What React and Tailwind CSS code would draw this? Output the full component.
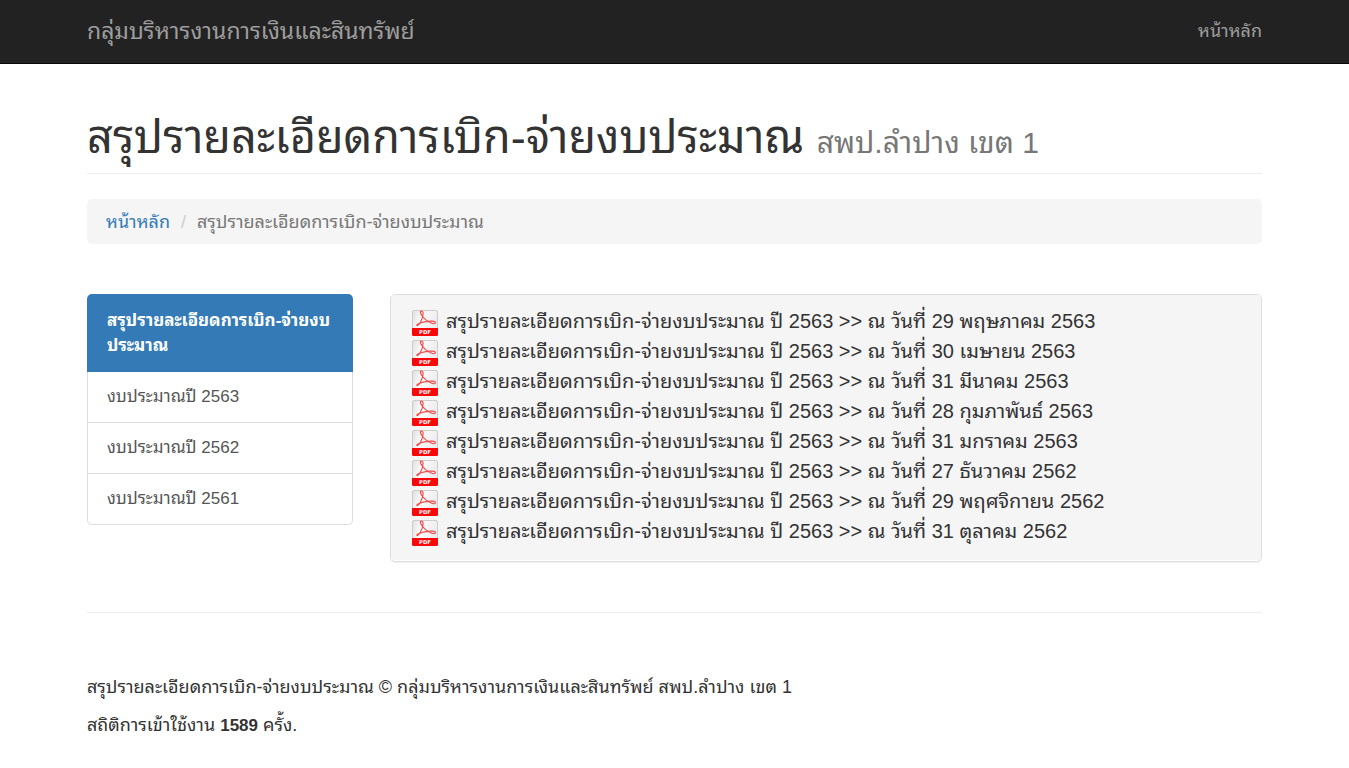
const title = 'สรุปรายละเอียดการเบิก-จ่ายงบประมาณ';
const dates = ['29 พฤษภาคม 2563', '30 เมษายน 2563', '31 มีนาคม 2563', '28 กุมภาพันธ์ 2563', '31 มกราคม 2563', '27 ธันวาคม 2562', '29 พฤศจิกายน 2562', '31 ตุลาคม 2562'];
const years = ['2563', '2562', '2561'];

function PdfIcon() {
  return (
    <svg className="h-[26px] w-[26px] shrink-0" viewBox="0 0 26 26" aria-hidden="true">
      <defs>
        <linearGradient id="paper" x1="0" y1="0" x2="1" y2="0.3">
          <stop offset="0" stopColor="#dedede" />
          <stop offset="0.4" stopColor="#fcfcfc" />
          <stop offset="1" stopColor="#ececec" />
        </linearGradient>
      </defs>
      <rect x="0.5" y="0.5" width="25" height="25" rx="1.5" fill="url(#paper)" stroke="#cccccc" />
      <path d="M0 18h26v6.500a1.500 1.500 0 0 1-1.500 1.500h-23A1.500 1.500 0 0 1 0 24.500z" fill="#f80808" />
      <path d="M10.500 6.500C9 4.500 8 2 8.800 1.300c.9-.7 2.300.2 2.300 2.200 0 3-1.200 6.300-3 9.300-1.100 1.900-2.300 3.200-3 2.800-.8-.6 1-2 3.700-2.800 3.700-1.200 8.200-1.800 11.700-1.600 2.100.1 3.200.9 2.800 1.800-.5 1-2.600.8-4.700-.2-3.200-1.500-6.300-3.900-8.100-6.300z" fill="none" stroke="#f34a4a" strokeWidth="1.200" />
      <text x="13" y="24" textAnchor="middle" fontFamily="DejaVu Sans, sans-serif" fontSize="5.300" fontWeight="700" fill="#fff">PDF</text>
    </svg>
  );
}

export default function App() {
  return (
    <div className="min-h-screen bg-white font-['Liberation_Sans','Noto_Sans_Thai_Looped','Loma','Garuda','Waree','Tahoma',sans-serif] text-[18px] leading-6 text-[#333]">
      <nav className="border-b border-[#080808] bg-[#222] text-[#9d9d9d]">
        <div className="mx-auto flex h-[63px] max-w-[1175px] items-center justify-between pb-0.5">
          <a href="#" className="text-[23px]">กลุ่มบริหารงานการเงินและสินทรัพย์</a>
          <a href="#">หน้าหลัก</a>
        </div>
      </nav>
      <main className="mx-auto max-w-[1175px] pt-12">
        <h1 className="border-b border-[#eee] pb-[9px] text-[45px] leading-[52px]">{title} <small className="text-[30px] leading-none text-[#777]">สพป.ลำปาง เขต 1</small></h1>
        <nav className="mt-[25px] flex h-[45px] items-center rounded-[5px] bg-[#f5f5f5] px-[19px]">
          <a href="#" className="text-[#337ab7]">หน้าหลัก</a>
          <span className="px-[11px] text-[#ccc]">/</span>
          <span className="text-[#777]">{title}</span>
        </nav>
        <div className="mt-[50px] flex items-start gap-[37px]">
          <nav className="w-[266px] shrink-0">
            <a href="#" className="block rounded-t-[5px] bg-[#337ab7] px-5 py-[14px] text-[17px] leading-[25px] font-bold text-white">สรุปรายละเอียดการเบิก-จ่ายงบ<wbr />ประมาณ</a>
            {years.map(y => <a key={y} href="#" className="block border-x border-b border-[#ddd] px-[19px] py-[13px] text-[17px] text-[#555] last:rounded-b-[5px]">งบประมาณปี {y}</a>)}
          </nav>
          <section className="grow rounded-[5px] border border-[#ddd] bg-white pb-px shadow-[0_1px_1px_rgba(0,0,0,0.05)]">
            <div className="rounded-t-[4px] bg-[#f5f5f5] px-[21px] pt-[11px] pb-[14px]">
              {dates.map(d => <a key={d} href="#" className="flex h-[30px] items-end gap-2 text-[20px] leading-[30px]"><PdfIcon /><span>{title} ปี 2563 &gt;&gt; ณ วันที่ {d}</span></a>)}
            </div>
          </section>
        </div>
        <hr className="mt-[50px] border-[#eee]" />
        <footer className="mt-[62px]">
          <p>{title} © กลุ่มบริหารงานการเงินและสินทรัพย์ สพป.ลำปาง เขต 1</p>
          <p className="mt-[14px] pb-4">สถิติการเข้าใช้งาน <b className="text-[17px]">1589</b> ครั้ง.</p>
        </footer>
      </main>
    </div>
  );
}
